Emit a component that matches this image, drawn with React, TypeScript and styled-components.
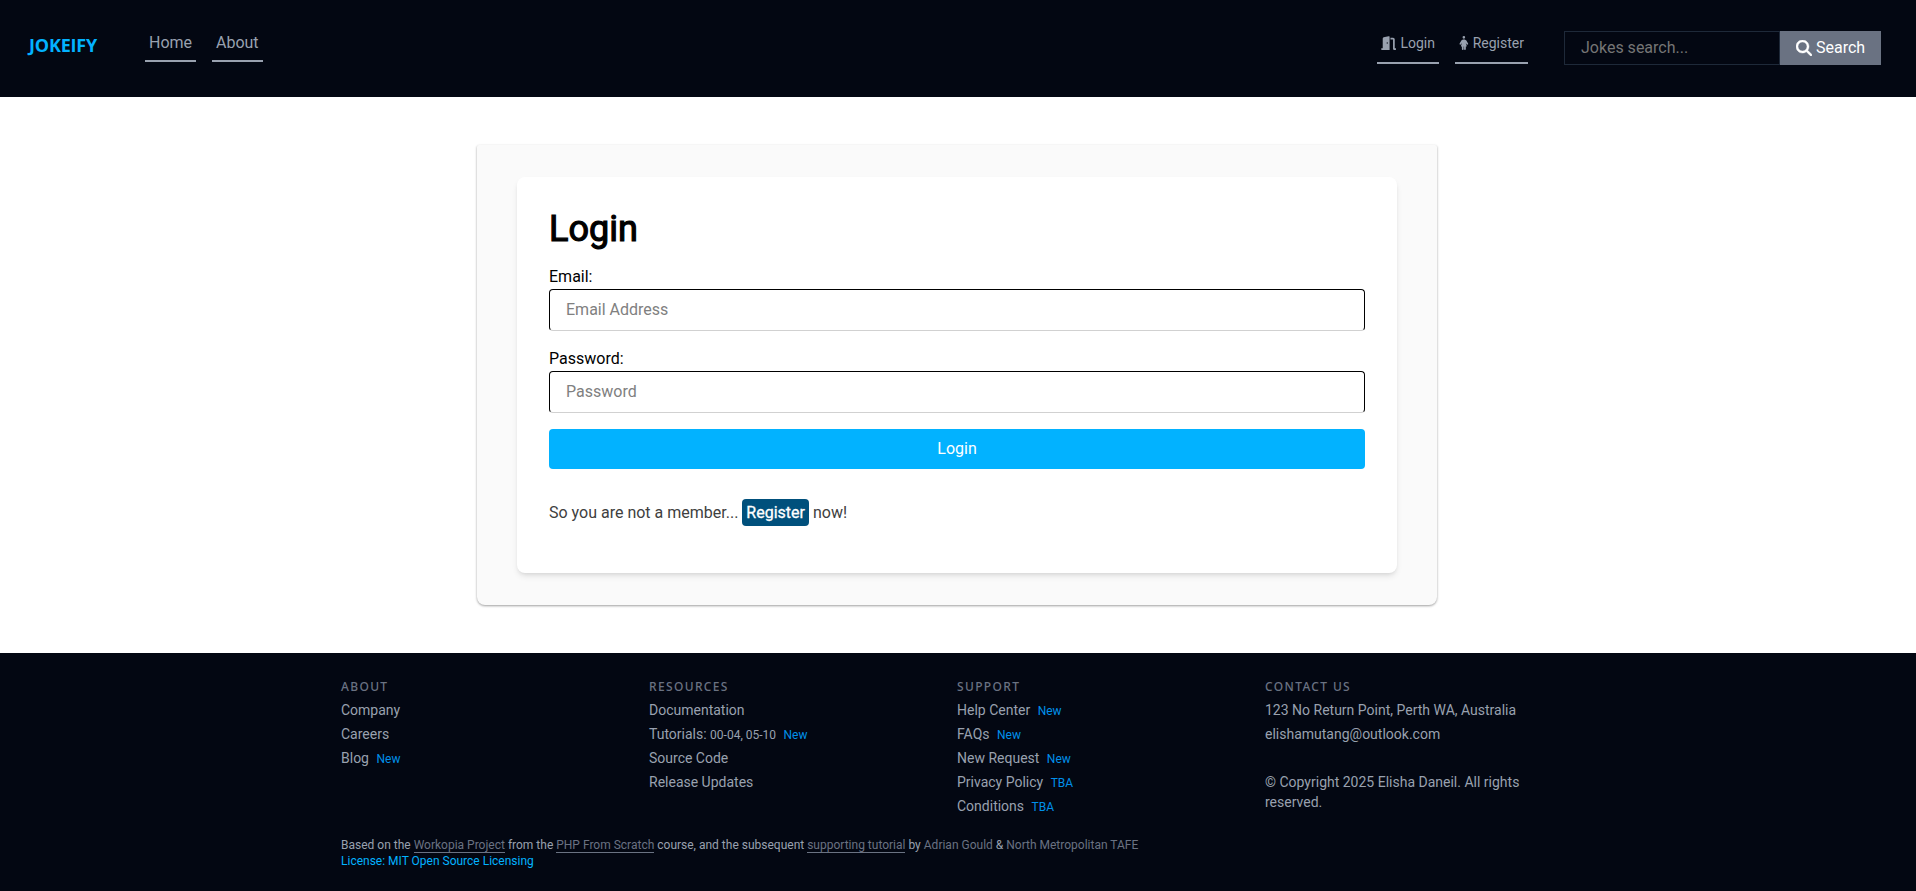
import React from 'react';
import styled, { createGlobalStyle } from 'styled-components';
import { FaDoorOpen, FaPersonDress, FaMagnifyingGlass } from 'react-icons/fa6';

const GlobalStyle = createGlobalStyle`
  *, *::before, *::after { box-sizing: border-box; }
  body { margin: 0; background: #fff; color: #000; font: 400 16px/24px Roboto, "Liberation Sans", sans-serif; }
  h1, h2, p, ul { margin: 0; padding: 0; }
  ul { list-style: none; }
  a { color: inherit; text-decoration: none; }
  input, button { font: inherit; margin: 0; border-radius: 0; }
`;

const Page = styled.div`
  display: flex;
  flex-direction: column;
  min-height: 891px;
`;

const Header = styled.header`
  display: flex;
  align-items: flex-start;
  height: 97px;
  padding: 31px 35px 0 29px;
  background: #030712;
`;

const Brand = styled.a`
  width: 116px;
  color: #02b2ff;
  font: 700 18px/28px "Open Sans", "Noto Sans", sans-serif;
  letter-spacing: -0.2px;
`;

const Nav = styled.nav<{ $small?: boolean }>`
  display: flex;
  gap: 16px;
  font-size: ${(p) => (p.$small ? 14 : 16)}px;
  line-height: ${(p) => (p.$small ? 20 : 24)}px;
  ${(p) => (p.$small ? 'margin: 2px 36px 0 auto;' : '')}
`;

const NavLink = styled.a<{ $width: number; $small?: boolean }>`
  display: flex;
  align-items: center;
  gap: 4px;
  width: ${(p) => p.$width}px;
  height: 31px;
  padding: 0 4px ${(p) => (p.$small ? 9 : 5)}px;
  border-bottom: 2px solid #99a1af;
  color: #99a1af;
  white-space: nowrap;
`;

const DoorIcon = styled(FaDoorOpen)`
  width: 16px;
  height: 14px;
`;

const PersonIcon = styled(FaPersonDress)`
  width: 10px;
  height: 14px;
`;

const SearchIcon = styled(FaMagnifyingGlass)`
  width: 16px;
  height: 16px;
  stroke: currentColor;
  stroke-width: 14px;
`;

const SearchForm = styled.form`
  display: flex;
  height: 34px;
`;

const SearchInput = styled.input`
  width: 216px;
  padding: 0 16px;
  border: 1px solid #1e2939;
  background: transparent;
  color: #fff;
  outline: none;
  &::placeholder { color: #757575; opacity: 1; }
`;

const SearchButton = styled.button`
  display: flex;
  align-items: center;
  gap: 4px;
  width: 101px;
  padding: 0 0 0 16px;
  border: 0;
  background: #6a7282;
  color: #fff;
`;

const Main = styled.main`
  width: 960px;
  height: 460px;
  margin: 48px 0 48px 477px;
  padding: 32px 40px;
  border-radius: 2px 2px 8px 8px;
  background: #fafafa;
  box-shadow: 0 1px 3px rgba(0, 0, 0, 0.2), 0 1px 2px rgba(0, 0, 0, 0.2);
`;

const Card = styled.section`
  height: 396px;
  padding: 32px;
  border-radius: 8px;
  background: #fff;
  box-shadow: 0 4px 6px -1px rgba(0, 0, 0, 0.1), 0 2px 4px -2px rgba(0, 0, 0, 0.1);
`;

const Title = styled.h1`
  margin-bottom: 16px;
  font-size: 36px;
  font-weight: 400;
  -webkit-text-stroke: 1.2px #000;
  line-height: 40px;
`;

const Field = styled.label`
  display: flex;
  flex-direction: column;
  margin-bottom: 16px;
`;

const TextInput = styled.input`
  height: 42px;
  padding: 0 16px 2px;
  border: 1px solid #000;
  border-bottom-color: #d1d1d1;
  border-radius: 4px;
  background: #fff;
  outline: none;
  &::placeholder { color: #808080; opacity: 1; }
`;

const Submit = styled.button`
  display: block;
  width: 100%;
  height: 40px;
  padding: 0;
  border: 0;
  border-radius: 4px;
  background: #02b2ff;
  color: #fff;
`;

const Prompt = styled.p`
  margin-top: 32px;
  color: #404040;
`;

const RegisterLink = styled.a`
  padding: 4px;
  border-radius: 4px;
  background: #00507c;
  color: #fff;
  -webkit-text-stroke: 0.3px #fff;
`;

const Footer = styled.footer`
  flex: 1;
  padding: 24px 342px 0 341px;
  background: #030712;
  color: #99a1af;
`;

const Columns = styled.div`
  display: grid;
  grid-template-columns: repeat(4, 284px);
  column-gap: 24px;
  height: 160px;
`;

const ColumnTitle = styled.h2`
  margin-bottom: 4px;
  color: #6a7282;
  font: 500 12px/19px "Noto Sans", "Open Sans", sans-serif;
  letter-spacing: 1.35px;
  text-transform: uppercase;
`;

const LinkList = styled.ul`
  display: grid;
  gap: 4px;
  font-size: 14px;
  line-height: 20px;
`;

const Item = styled.li`
  min-height: 20px;
`;

const Small = styled.span`
  font-size: 12px;
  line-height: 1;
`;

const Tag = styled(Small)`
  margin-left: 7.5px;
  color: #0090ea;
`;

const Credits = styled.p`
  font-size: 12px;
  line-height: 16px;
`;

const Credit = styled.a<{ $underlined?: boolean }>`
  color: #6a7282;
  border-bottom: ${(p) => (p.$underlined ? '1px solid #6a7282' : '0')};
`;

const License = styled.p`
  color: #02b2ff;
  font-size: 12px;
  line-height: 16px;
`;

type Entry = { text: string; detail?: string; tag?: string };

const columns: { title: string; entries: Entry[] }[] = [
  { title: 'About', entries: [{ text: 'Company' }, { text: 'Careers' }, { text: 'Blog', tag: 'New' }] },
  {
    title: 'Resources',
    entries: [
      { text: 'Documentation' },
      { text: 'Tutorials: ', detail: '00-04, 05-10', tag: 'New' },
      { text: 'Source Code' },
      { text: 'Release Updates' },
    ],
  },
  {
    title: 'Support',
    entries: [
      { text: 'Help Center', tag: 'New' },
      { text: 'FAQs', tag: 'New' },
      { text: 'New Request', tag: 'New' },
      { text: 'Privacy Policy', tag: 'TBA' },
      { text: 'Conditions', tag: 'TBA' },
    ],
  },
  {
    title: 'Contact us',
    entries: [
      { text: '123 No Return Point, Perth WA, Australia' },
      { text: 'elishamutang@outlook.com' },
      { text: '' },
      { text: '© Copyright 2025 Elisha Daneil. All rights reserved.' },
    ],
  },
];

export default function App() {
  return (
    <Page>
      <GlobalStyle />
      <Header>
        <Brand href="#">JOKEIFY</Brand>
        <Nav>
          <NavLink href="#" $width={51}>Home</NavLink>
          <NavLink href="#" $width={51}>About</NavLink>
        </Nav>
        <Nav $small>
          <NavLink href="#" $width={62} $small><DoorIcon />Login</NavLink>
          <NavLink href="#" $width={73} $small><PersonIcon />Register</NavLink>
        </Nav>
        <SearchForm>
          <SearchInput placeholder="Jokes search..." />
          <SearchButton type="button"><SearchIcon />Search</SearchButton>
        </SearchForm>
      </Header>
      <Main>
        <Card>
          <Title>Login</Title>
          <Field>Email:<TextInput placeholder="Email Address" /></Field>
          <Field>Password:<TextInput type="password" placeholder="Password" /></Field>
          <Submit type="button">Login</Submit>
          <Prompt>So you are not a member... <RegisterLink href="#">Register</RegisterLink> now!</Prompt>
        </Card>
      </Main>
      <Footer>
        <Columns>
          {columns.map((column) => (
            <section key={column.title}>
              <ColumnTitle>{column.title}</ColumnTitle>
              <LinkList>
                {column.entries.map((entry, i) => (
                  <Item key={i}>
                    {entry.text}
                    {entry.detail && <Small>{entry.detail}</Small>}
                    {entry.tag && <Tag>{entry.tag}</Tag>}
                  </Item>
                ))}
              </LinkList>
            </section>
          ))}
        </Columns>
        <Credits>
          Based on the <Credit href="#" $underlined>Workopia Project</Credit> from the{' '}
          <Credit href="#" $underlined>PHP From Scratch</Credit> course, and the subsequent{' '}
          <Credit href="#" $underlined>supporting tutorial</Credit> by <Credit href="#">Adrian Gould</Credit> &{' '}
          <Credit href="#">North Metropolitan TAFE</Credit>
        </Credits>
        <License>License: MIT Open Source Licensing</License>
      </Footer>
    </Page>
  );
}
